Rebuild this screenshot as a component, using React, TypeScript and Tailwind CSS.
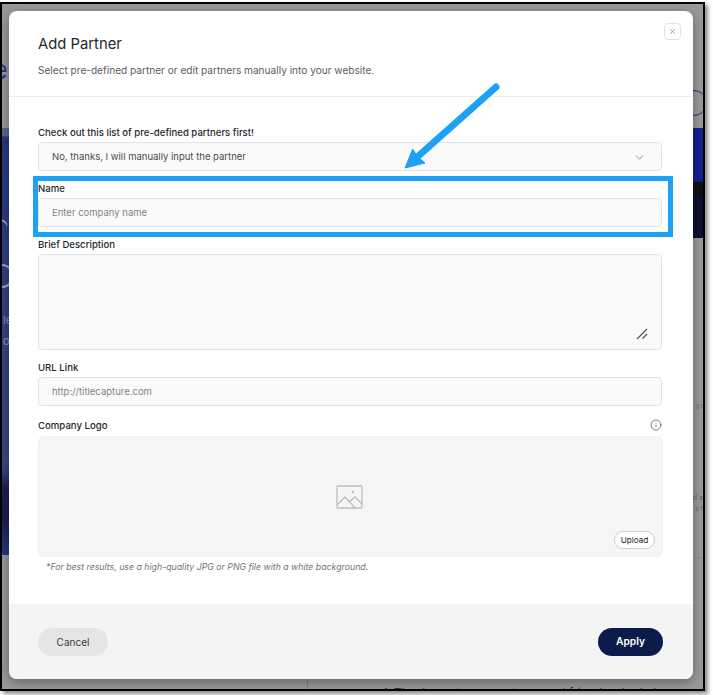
import { ChevronDown, Info, X } from "lucide-react";

const labelCls = "h-[14px] text-[9.6px] leading-[16px] font-medium text-[#27272a] block";
const inputCls =
  "h-[29px] w-full rounded-[4px] border border-[#e2e2e2] bg-[#fafafa] pl-[13px] pr-3 pt-[2px] flex items-center text-[9.5px]";

function Backdrop() {
  return (
    <>
      <div className="absolute left-0 top-[124px] h-[427px] w-[8px] bg-[linear-gradient(180deg,#5c6390_0,#5c6390_8px,#2a3880_9px,#2a3a80_80px,#38427f_200px,#3d4580_340px,#1b1f52_360px,#191c4f_390px,#2c3a80_427px)]" />
      <div className="absolute right-0 top-[124px] h-[54px] w-[12px] bg-[#14208f]" />
      <div className="absolute right-0 top-[178px] h-[14px] w-[12px] bg-[#111111]" />
      <div className="absolute right-0 top-[192px] h-[42px] w-[12px] bg-[#0e1030]" />
      <div className="absolute right-[-4px] top-[86px] size-[26px] rounded-full border border-[#28307f]" />
      <span className="absolute left-[-10px] top-[51px] text-[27px] leading-[30px] text-[#2b3a92]">e</span>
      <div className="absolute left-[-12px] top-[260px] size-[24px] rounded-full border-2 border-[#a5a7bb]" />
      <div className="absolute left-[-20px] top-[212px] h-[12px] w-[26px] rotate-[28deg] rounded-full border-t-2 border-[#a5a7bb]" />
      <span className="absolute left-[1px] top-[309px] text-[11px] leading-[14px] text-[#8e93b5]">le</span>
      <span className="absolute left-[1px] top-[330px] text-[11px] leading-[14px] text-[#8e93b5]">oy</span>
      <span className="absolute right-0 top-[398px] text-[6px] leading-[8px] text-[#666666]">y,r</span>
      <span className="absolute right-0 top-[489px] text-[7px] leading-[9px] text-[#6a6a6a]">d a</span>
      <span className="absolute right-0 top-[500px] text-[7px] leading-[9px] text-[#6a6a6a]">s t</span>
      <div className="absolute right-0 top-[553px] h-px w-[12px] bg-[#8b8b8b]" />
      <div className="absolute bottom-0 left-[305px] top-[676px] w-px bg-[#808080]" />
      <div className="absolute bottom-[-10px] left-[380px] whitespace-nowrap text-[12px] leading-[12px] text-[#333333]">
        A Thank you to our partners and friends who help
      </div>
    </>
  );
}

function Arrow() {
  return (
    <svg className="absolute left-[391px] top-[70px]" width="104" height="94" viewBox="0 0 104 94" fill="none">
      <path d="M96 6 L15 78" stroke="#1ba1f5" strokeWidth="7" strokeLinecap="round" />
      <path d="M5 87 L12.7 68 L17 75 L25 82 Z" fill="#1ba1f5" stroke="#1ba1f5" strokeWidth="1" strokeLinejoin="round" />
    </svg>
  );
}

export default function App() {
  return (
    <div className="w-[713px] h-[695px] overflow-hidden bg-white pt-[2px] pr-[8px] pb-[4px] font-['Inter',sans-serif]">
      <div className="relative h-full w-full overflow-hidden border-2 border-black bg-[#999999] pt-[7px] pr-[10px] pb-[10px] pl-[7px] shadow-[3px_3px_4px_rgba(0,0,0,0.45)]">
        <Backdrop />

        <div className="relative flex h-full flex-col rounded-[8px] bg-white shadow-[0_3px_12px_rgba(0,0,0,0.35)]">
          <div className="relative h-[86px] shrink-0 border-b border-[#ececec] pl-[29px] pt-[24px]">
            <h1 className="text-[14.8px] leading-[18px] font-normal text-[#27272a]">Add Partner</h1>
            <p className="mt-[10px] text-[10.1px] leading-[14px] text-[#5b5b5f]">
              Select pre-defined partner or edit partners manually into your website.
            </p>
            <button className="absolute right-[12px] top-[12px] flex size-[17px] items-center justify-center rounded-[4px] border border-[#e4e4e4] text-[#8a8a8a]">
              <X className="size-[9px]" strokeWidth={2} />
            </button>
          </div>

          <div className="flex min-h-0 flex-1 flex-col pl-[29px] pr-[31px] pt-[28px]">
            <label className={labelCls}>Check out this list of pre-defined partners first!</label>
            <div className={`${inputCls} mt-[3px] justify-between text-[#4b4b4f]`}>
              <span>No, thanks, I will manually input the partner</span>
              <ChevronDown className="mr-[3px] size-[13px] text-[#777777]" strokeWidth={1.5} />
            </div>

            <label className={`${labelCls} mt-[10px]`}>Name</label>
            <div className={`${inputCls} mt-[3px] text-[#838387]`}>Enter company name</div>

            <label className={`${labelCls} mt-[10px]`}>Brief Description</label>
            <div className="relative mt-[3px] h-[96px] w-full rounded-[4px] border border-[#e2e2e2] bg-[#fafafa]">
              <svg className="absolute bottom-[9px] right-[13px]" width="12" height="12" viewBox="0 0 12 12" fill="none" stroke="#555555" strokeWidth="1.2">
                <path d="M1 11 L11 1" />
                <path d="M6.5 10.5 L11 6" />
              </svg>
            </div>

            <label className={`${labelCls} mt-[10px]`}>URL Link</label>
            <div className={`${inputCls} mt-[3px] text-[#838387]`}>http://titlecapture.com</div>

            <div className="mt-[12px] flex items-center justify-between">
              <label className={labelCls}>Company Logo</label>
              <Info className="size-[12px] text-[#5f5f5f]" strokeWidth={1.6} />
            </div>
            <div className="mt-[4px] -mr-px flex h-[121px] flex-col rounded-[6px] border border-[#f0f0f0] bg-[#f5f5f5] pr-[7px] pb-[7px]">
              <div className="flex flex-1 items-center justify-center pt-[25px]">
                <svg className="ml-[5px]" width="27" height="24" viewBox="0 0 27 24" fill="none" stroke="#bdbdbd" strokeWidth="1.3">
                  <rect x="1" y="1" width="25" height="22" rx="1" />
                  <path d="M1 20 L9 12 L19 23" />
                  <path d="M14 16.5 L19 12 L26 19" />
                  <circle cx="17" cy="7" r="1.2" fill="#bdbdbd" stroke="none" />
                </svg>
              </div>
              <button className="h-[18px] w-[41px] self-end rounded-full border border-[#cfcfcf] bg-white text-[8.2px] leading-[16px] text-[#27272a]">
                Upload
              </button>
            </div>
            <p className="mt-[4px] pl-[8px] text-[8.75px] leading-[12px] italic text-[#737377]">
              *For best results, use a high-quality JPG or PNG file with a white background.
            </p>
          </div>

          <div className="flex h-[75px] shrink-0 items-start justify-between rounded-b-[8px] bg-[#f4f4f4] pl-[29px] pr-[30px] pt-[24px]">
            <button className="h-[28px] w-[70px] rounded-full bg-[#e5e5e5] text-[10px] text-[#3a3a3d]">Cancel</button>
            <button className="h-[28px] w-[65px] rounded-full bg-[#0b1b4b] text-[10.2px] font-semibold text-white">Apply</button>
          </div>

          <div className="absolute left-[24px] top-[165px] h-[61px] w-[640px] border-[5px] border-[#1ba1f5]" />
          <Arrow />
        </div>
      </div>
    </div>
  );
}
